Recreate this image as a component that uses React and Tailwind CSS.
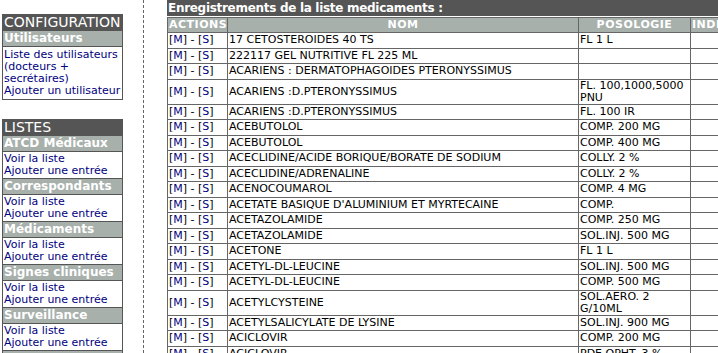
import React from 'react';

const FONT = { fontFamily: '"DejaVu Sans", Verdana, sans-serif' };

const configLinks = ['Liste des utilisateurs (docteurs + secrétaires)', 'Ajouter un utilisateur'];

const listes = ['ATCD Médicaux', 'Correspondants', 'Médicaments', 'Signes cliniques', 'Surveillance'];

const rows = [
  ['17 CETOSTEROIDES 40 TS', 'FL 1 L'],
  ['222117 GEL NUTRITIVE FL 225 ML', ''],
  ['ACARIENS : DERMATOPHAGOIDES PTERONYSSIMUS', ''],
  ['ACARIENS :D.PTERONYSSIMUS', 'FL. 100,1000,5000 PNU'],
  ['ACARIENS :D.PTERONYSSIMUS', 'FL. 100 IR'],
  ['ACEBUTOLOL', 'COMP. 200 MG'],
  ['ACEBUTOLOL', 'COMP. 400 MG'],
  ['ACECLIDINE/ACIDE BORIQUE/BORATE DE SODIUM', 'COLLY. 2 %'],
  ['ACECLIDINE/ADRENALINE', 'COLLY. 2 %'],
  ['ACENOCOUMAROL', 'COMP. 4 MG'],
  ["ACETATE BASIQUE D'ALUMINIUM ET MYRTECAINE", 'COMP.'],
  ['ACETAZOLAMIDE', 'COMP. 250 MG'],
  ['ACETAZOLAMIDE', 'SOL.INJ. 500 MG'],
  ['ACETONE', 'FL 1 L'],
  ['ACETYL-DL-LEUCINE', 'SOL.INJ. 500 MG'],
  ['ACETYL-DL-LEUCINE', 'COMP. 500 MG'],
  ['ACETYLCYSTEINE', 'SOL.AERO. 2 G/10ML'],
  ['ACETYLSALICYLATE DE LYSINE', 'SOL.INJ. 900 MG'],
  ['ACICLOVIR', 'COMP. 200 MG'],
  ['ACICLOVIR', 'PDE.OPHT. 3 %'],
];

const Sidebar = () => (
  <div className="w-[144px] shrink-0 border-r border-dashed border-[#666] pl-[2px] pt-[14px]">
    {/* Configuration */}
    <div className="w-[121px] border-x border-b border-[#555]">
      <div className="bg-[#555] text-white text-[14px] leading-[17px] px-px">CONFIGURATION</div>
      <div className="bg-[#a8b0ac] text-white font-bold text-[12px] leading-[15px] px-px border-b border-[#555]">
        Utilisateurs
      </div>
      <div className="bg-white px-px py-[2px] text-[11px] leading-[12px]">
        {configLinks.map((l) => (
          <a key={l} href="#" className="block text-[#000080]">
            {l}
          </a>
        ))}
      </div>
    </div>

    {/* Listes */}
    <div className="w-[121px] mt-[19px] border-x border-[#555]">
      <div className="bg-[#555] text-white text-[14px] leading-[17px] px-px">LISTES</div>
      {listes.map((name) => (
        <div key={name}>
          <div className="bg-[#a8b0ac] text-white font-bold text-[12px] leading-[15px] px-px border-b border-[#555]">
            {name}
          </div>
          <div className="bg-white px-px py-px text-[11px] leading-[12px] border-b border-[#555]">
            <a href="#" className="block text-[#000080]">Voir la liste</a>
            <a href="#" className="block text-[#000080]">Ajouter une entrée</a>
          </div>
        </div>
      ))}
      <div className="bg-[#a8b0ac] h-[15px]" />
    </div>
  </div>
);

const Main = () => (
  <div className="flex-1 min-w-0 overflow-hidden pl-[23px]">
    <div className="w-[640px]">
      <div className="bg-[#555] text-white font-bold text-[12px] tracking-[-0.3px] leading-[16px] px-px mb-px whitespace-nowrap">
        Enregistrements de la liste medicaments :
      </div>
      <table className="table-fixed w-full border-collapse text-[11px] leading-[12px] text-black">
        <colgroup>
          <col className="w-[60px]" />
          <col className="w-[351px]" />
          <col className="w-[112px]" />
          <col />
        </colgroup>
        <thead>
          <tr className="bg-[#a8b0ac] text-white text-[11px] tracking-[0.5px]">
            <th className="border border-[#666] text-left px-px leading-[14px] font-bold">ACTIONS</th>
            <th className="border border-[#666] text-center leading-[14px] font-bold">NOM</th>
            <th className="border border-[#666] text-center leading-[14px] font-bold">POSOLOGIE</th>
            <th className="border border-[#666] text-left px-px leading-[14px] font-bold whitespace-nowrap">INDICATIONS</th>
          </tr>
        </thead>
        <tbody>
          {rows.map(([nom, poso], i) => (
            <tr key={i} className="bg-white h-[15.5px]">
              <td className="border border-[#666] px-px py-0 whitespace-nowrap">
                [<a href="#" className="text-[#000080]">M</a>] - [<a href="#" className="text-[#000080]">S</a>]
              </td>
              <td className="border border-[#666] px-px py-0">{nom}</td>
              <td className="border border-[#666] px-px py-0">{poso}</td>
              <td className="border border-[#666] px-px py-0"></td>
            </tr>
          ))}
        </tbody>
      </table>
    </div>
  </div>
);

export default function App() {
  return (
    <div className="flex w-[718px] h-[353px] overflow-hidden bg-white" style={FONT}>
      <Sidebar />
      <Main />
    </div>
  );
}
